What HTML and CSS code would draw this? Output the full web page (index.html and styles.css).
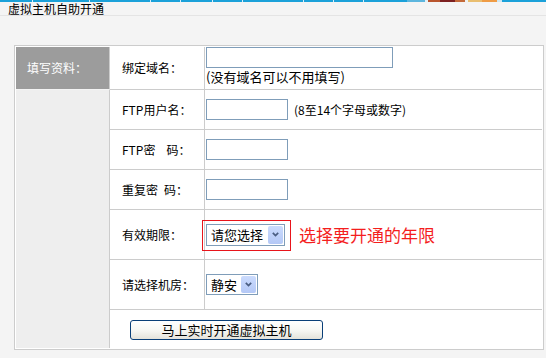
FILE: index.html
```html
<!DOCTYPE html>
<html lang="zh-CN">
  <head>
    <meta charset="UTF-8" />
    <meta name="viewport" content="width=device-width, initial-scale=1.0" />
    <title>虚拟主机自助开通</title>
    <link rel="stylesheet" href="styles.css">
  </head>
  <body>
    <div class="topbar"></div>
    <div class="title">虚拟主机自助开通</div>

    <form>
      <table class="form-table">
        <tr class="row-first">
          <td class="side-head">填写资料：</td>
          <td class="label">绑定域名：</td>
          <td class="field field-top">
            <input type="text" class="text text-long" name="domain">
            <div class="note">(没有域名可以不用填写)</div>
          </td>
        </tr>
        <tr>
          <td class="side" rowspan="6"></td>
          <td class="label">FTP用户名：</td>
          <td class="field">
            <div class="inline">
              <input type="text" class="text" name="ftpuser">
              <span class="hint">(8至14个字母或数字)</span>
            </div>
          </td>
        </tr>
        <tr>
          <td class="label">FTP密<span class="sp2"></span>码：</td>
          <td class="field"><input type="password" class="text" name="ftppass"></td>
        </tr>
        <tr>
          <td class="label">重复密<span class="sp1"></span>码：</td>
          <td class="field"><input type="password" class="text" name="ftppass2"></td>
        </tr>
        <tr class="row-tall">
          <td class="label">有效期限：</td>
          <td class="field">
            <div class="inline">
              <span class="select-box select-year marked">
                <select name="years">
                  <option>请您选择</option>
                  <option>1年</option>
                  <option>2年</option>
                  <option>3年</option>
                </select>
                <span class="select-btn">
                  <svg width="7" height="5" viewBox="0 0 7 5"><path d="M0.8 0.8 L3.5 3.6 L6.2 0.8" fill="none" stroke="#4b5e82" stroke-width="1.7"/></svg>
                </span>
              </span>
              <span class="tip">选择要开通的年限</span>
            </div>
          </td>
        </tr>
        <tr class="row-tall">
          <td class="label">请选择机房：</td>
          <td class="field">
            <span class="select-box select-room">
              <select name="room">
                <option>静安</option>
              </select>
              <span class="select-btn">
                <svg width="7" height="5" viewBox="0 0 7 5"><path d="M0.8 0.8 L3.5 3.6 L6.2 0.8" fill="none" stroke="#4b5e82" stroke-width="1.7"/></svg>
              </span>
            </span>
          </td>
        </tr>
        <tr class="row-last">
          <td class="submit-cell" colspan="2">
            <button type="button" class="btn">马上实时开通虚拟主机</button>
          </td>
        </tr>
      </table>
    </form>
  </body>
</html>
```

FILE: styles.css
```css
body {
  margin: 0;
  padding: 0;
  background-color: #f4f4f4;
  font-family: "Noto Sans CJK SC", sans-serif;
  font-size: 12px;
  color: #000;
}

form {
  margin: 0;
}

.topbar {
  height: 2px;
  background: linear-gradient(to right,
    #1ba1d9 0 32px, #d6eef9 32px 33px,
    #1ba1d9 33px 89px, #d6eef9 89px 90px,
    #1ba1d9 90px 150px, #d6eef9 150px 151px,
    #1ba1d9 151px 180px, #d6eef9 180px 181px,
    #1ba1d9 181px 212px, #d6eef9 212px 213px,
    #1ba1d9 213px 242px, #d6eef9 242px 243px,
    #1ba1d9 243px 303px, #d6eef9 303px 304px,
    #1ba1d9 304px 333px, #d6eef9 333px 334px,
    #1ba1d9 334px 363px, #d6eef9 363px 364px,
    #1ba1d9 364px 407px, #5db6de 407px 425px,
    #e3f1f7 425px 428px, #b9552e 428px 440px,
    #7c2020 440px 455px, #c46a3a 455px 465px,
    #eef3f3 465px 468px, #e9be70 468px 482px,
    #ef9c45 482px 497px, #cfe7f2 497px 502px,
    #1ba1d9 502px);
}

.title {
  height: 13px;
  line-height: 13px;
  padding-left: 8px;
  border-bottom: 1px solid #e4e4e4;
}

.form-table {
  box-sizing: border-box;
  width: 530px;
  margin: 29px 0 0 14px;
  padding: 1px;
  border: 1px solid #cccccc;
  border-collapse: separate;
  border-spacing: 0;
  table-layout: fixed;
  background: #fff;
}

.form-table td {
  box-sizing: border-box;
  padding: 0;
  line-height: 14px;
  vertical-align: middle;
}

.form-table tr {
  height: 40px;
}

.form-table .row-first {
  height: 43px;
}

.form-table .row-tall {
  height: 50px;
}

.form-table .row-last {
  height: 38px;
}

/* labels use the TC face so the full-width colon sits centred */
.side-head,
.label {
  font-family: "Noto Sans CJK TC", "Noto Sans CJK SC", sans-serif;
}

.side-head {
  width: 94px;
  padding-left: 11px !important;
  background-color: #9c9c9c;
  color: #fff;
  border-right: 1px solid #cccccc;
  border-bottom: 1px solid #f4f4f4;
}

.side {
  background-color: #eeeeee;
  border-right: 1px solid #cccccc;
}

.label {
  width: 95px;
  padding-left: 12px !important;
  border-right: 1px solid #cccccc;
  border-bottom: 1px solid #cccccc;
  white-space: nowrap;
}

.sp1,
.sp2 {
  display: inline-block;
}

.sp1 {
  width: 6px;
}

.sp2 {
  width: 11px;
}

.field {
  padding-left: 1px !important;
  border-bottom: 1px solid #cccccc;
}

.field-top {
  vertical-align: top !important;
}

.inline {
  display: flex;
  align-items: center;
}

.text {
  box-sizing: border-box;
  display: block;
  width: 82px;
  height: 21px;
  margin: 0;
  padding: 0 2px;
  border: 1px solid #7f9db9;
  background: #fff;
  font-family: "Noto Sans CJK SC", sans-serif;
  font-size: 12px;
  outline: none;
}

.text-long {
  width: 187px;
}

.note {
  margin-top: 2px;
  font-size: 13px;
  line-height: 14px;
}

.hint {
  margin-left: 6px;
  font-size: 12px;
}

.select-box {
  position: relative;
  display: inline-block;
  vertical-align: middle;
}

.select-box select {
  box-sizing: border-box;
  display: block;
  width: 100%;
  height: 100%;
  margin: 0;
  padding: 0 0 0 4px;
  border: 1px solid #7f9db9;
  background: #fff;
  font-family: "Noto Sans CJK SC", sans-serif;
  font-size: 13px;
  color: #000;
  appearance: none;
  -webkit-appearance: none;
  outline: none;
}

.select-year {
  width: 79px;
  height: 22px;
}

.select-room {
  width: 52px;
  height: 21px;
}

.select-btn {
  position: absolute;
  top: 2px;
  right: 2px;
  bottom: 2px;
  width: 15px;
  display: flex;
  align-items: center;
  justify-content: center;
  border-radius: 2px;
  background: linear-gradient(#cbdbfd, #b4c8f6);
  pointer-events: none;
}

.marked::after {
  content: "";
  position: absolute;
  top: -4px;
  left: -4px;
  right: -6px;
  bottom: -5px;
  border: 1px solid #e8141b;
  pointer-events: none;
}

.tip {
  margin-left: 14px;
  font-size: 17px;
  line-height: 20px;
  color: #f41e1e;
}

.submit-cell {
  padding: 1px 0 0 20px !important;
}

.btn {
  box-sizing: border-box;
  display: block;
  width: 193px;
  height: 20px;
  padding: 0;
  border: 1px solid #0a3f78;
  border-radius: 3px;
  background: linear-gradient(#ffffff, #f6f6f2 55%, #e4e2da);
  font-family: "Noto Sans CJK SC", sans-serif;
  font-size: 13px;
  line-height: 17px;
  color: #000;
  cursor: pointer;
}
```
